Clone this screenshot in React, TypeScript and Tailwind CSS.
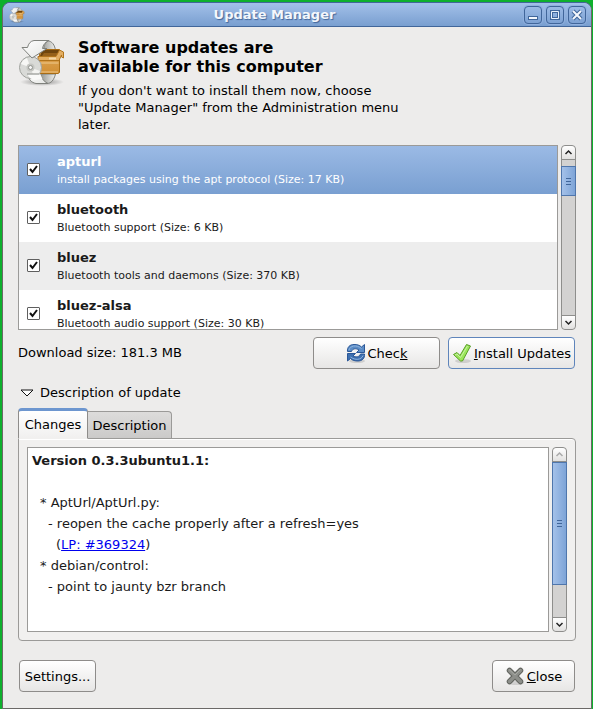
import { useState } from "react";
import type { ReactNode } from "react";

const updates = [
  { name: "apturl", summary: "install packages using the apt protocol (Size: 17 KB)" },
  { name: "bluetooth", summary: "Bluetooth support (Size: 6 KB)" },
  { name: "bluez", summary: "Bluetooth tools and daemons (Size: 370 KB)" },
  { name: "bluez-alsa", summary: "Bluetooth audio support (Size: 30 KB)" },
];

function UpdateIcon({ className, id }: { className: string; id: string }) {
  return (
    <svg viewBox="0 0 48 48" className={className} aria-hidden="true">
      <defs>
        <linearGradient id={id + "-paper"} x1="0" y1="0" x2="1" y2="1">
          <stop offset="0" stopColor="#ffffff" />
          <stop offset="1" stopColor="#e4e5e2" />
        </linearGradient>
        <linearGradient id={id + "-curl"} x1="0" y1="0" x2="1" y2="0">
          <stop offset="0" stopColor="#8b8d88" />
          <stop offset="1" stopColor="#f0f0ee" />
        </linearGradient>
        <linearGradient id={id + "-box"} x1="0" y1="0" x2="0" y2="1">
          <stop offset="0" stopColor="#e0a95a" />
          <stop offset="1" stopColor="#d18f35" />
        </linearGradient>
        <radialGradient id={id + "-shade"}>
          <stop offset="0" stopColor="#000000" stopOpacity="0.4" />
          <stop offset="1" stopColor="#000000" stopOpacity="0" />
        </radialGradient>
      </defs>
      <ellipse cx="24" cy="44" rx="22" ry="4" fill={`url(#${id}-shade)`} />
      <path d="M22 2.500 H29 C34 3 37 7 37.500 13 H26 C25.500 9 26 6 30 3Z" fill={`url(#${id}-curl)`} stroke="#7f817c" />
      <path d="M21 36 H37.500 C36 42 33 45.500 29 45.500 C25 44 23 41 21 36Z" fill={`url(#${id}-curl)`} stroke="#7f817c" />
      <path d="M9 35.500 H22 C23.500 40 26 44 30 45.500 H18 C13 44.500 10.500 41 9 35.500Z" fill={`url(#${id}-paper)`} stroke="#7f817c" />
      <path d="M22 11.500 H41.500 V34.500 L40 35.500 H20Z" fill={`url(#${id}-box)`} stroke="#a96c14" />
      <path d="M24 12 H41 V18 H22Z" fill="#6f450d" />
      <path d="M26 15 H41 V18 H24Z" fill="#95601a" />
      <path d="M20 18.500 H38 L41.500 12 L45.500 14 V20 L43.500 19 V17 L41 22.500 H20Z" fill="#e3ae62" stroke="#b1741c" />
      <path d="M21 25 H40.500 M21 34 H40" stroke="#efc98d" />
      <path d="M31 20.500 H38" stroke="#f5d8a7" strokeWidth="2" />
      <circle cx="12.500" cy="29.500" r="11" fill="#d9dad7" stroke="#a0a29d" />
      <path d="M12.500 29.500 L3 26 A10 10 0 0 1 9 20Z" fill="#f7f7f5" />
      <path d="M12.500 29.500 L22 33 A10 10 0 0 1 16 39Z" fill="#f4f4f2" />
      <circle cx="12.500" cy="29.500" r="4" fill="#c5c6c2" />
      <circle cx="12.500" cy="29.500" r="2" fill="#f6f6f6" stroke="#92948f" />
      <path d="M9 35.500 H22 L24.500 41 L16 42 C12.500 41 10.500 39 9 35.500Z" fill="#f9f9f8" />
      <path d="M9 36 H21.500" stroke="#7f817c" />
      <path d="M16 2.500 H31 C27 4 25 7 24.500 10.500 H29 L14 20 L4 9.500 H9.500 C10.500 5.500 12.500 3 16 2.500Z" fill={`url(#${id}-paper)`} stroke="#7f817c" strokeLinejoin="round" />
    </svg>
  );
}

function RefreshIcon() {
  return (
    <svg viewBox="0 0 20 20" className="size-5 shrink-0" aria-hidden="true">
      <ellipse cx="11" cy="18" rx="8" ry="2" fill="#000000" opacity="0.12" />
      <path d="M1.500 8.500 C1 4 4 1.500 8 1.500 C11 1.500 13.500 2 15.500 4 L18.500 1.500 V9.500 H10.500 L13 7 C10 5 6.500 5.500 5.500 8.500Z" fill="#5b8cc6" stroke="#2b5797" strokeLinejoin="round" />
      <path d="M18.500 11 C19 15.500 16 18 12 18 C9 18 6.500 17.500 4.500 15.500 L1.500 18 V10.500 H9.500 L7 13 C10 14.500 13.500 14 14.500 11Z" fill="#3f70b0" stroke="#2b5797" strokeLinejoin="round" />
      <path d="M3 7 C4 3 10 1 15.500 5.500 M17 12.500 C15.500 17 9 17.500 4.500 14" fill="none" stroke="#8fb5df" />
    </svg>
  );
}

function ApplyIcon() {
  return (
    <svg viewBox="0 0 20 20" className="size-5 shrink-0" aria-hidden="true">
      <ellipse cx="11" cy="18" rx="8" ry="2" fill="#000000" opacity="0.12" />
      <path d="M1.500 11.500 L5 9.500 L8 12.500 L14.500 1.500 L18.500 3 L10.500 18 H8.500Z" fill="#9be65a" stroke="#5a9e27" strokeLinejoin="round" />
      <path d="M3 12 L5 11 L8.500 14.500 L15.500 3" fill="none" stroke="#c9f3a6" />
    </svg>
  );
}

function CloseIcon() {
  return (
    <svg viewBox="0 0 20 20" className="size-5 shrink-0" aria-hidden="true">
      <ellipse cx="11" cy="17" rx="8" ry="2" fill="#000000" opacity="0.12" />
      <path d="M4.500 4.500 L15.500 15.500 M15.500 4.500 L4.500 15.500" stroke="#62645f" strokeWidth="5.500" strokeLinecap="round" />
      <path d="M4.500 4.500 L15.500 15.500 M15.500 4.500 L4.500 15.500" stroke="#8d8f8a" strokeWidth="3.500" strokeLinecap="round" />
      <path d="M4 3.500 L10 9 L15.500 3.500" fill="none" stroke="#a7a9a4" />
    </svg>
  );
}

function TitleButton({ label, children }: { label: string; children: ReactNode }) {
  return (
    <button aria-label={label} className="flex size-[18px] items-center justify-center rounded border border-[#41669a] bg-linear-to-b from-[#9bbae5] to-[#7da2d3] shadow-[0_0_0_1px_#91b1df]">
      <svg viewBox="0 0 16 16" className="size-4 shrink-0" aria-hidden="true">{children}</svg>
    </button>
  );
}

function Arrow({ up, muted }: { up?: boolean; muted?: boolean }) {
  return (
    <svg viewBox="0 0 13 13" className={`size-[13px] ${muted ? "text-[#aaa]" : "text-[#222]"}`} aria-hidden="true">
      <path d={up ? "M3.500 8 L6.500 5 L9.500 8" : "M3.500 5 L6.500 8 L9.500 5"} fill="none" stroke="currentColor" strokeWidth="1.500" />
    </svg>
  );
}

function ScrollBar({ label, thumb, gap, atTop }: { label: string; thumb: string; gap: string; atTop?: boolean }) {
  return (
    <div role="group" aria-label={label} className="flex w-[15px] shrink-0 flex-col rounded border border-[#8e8e8c] bg-[#d3d2d1]">
      <button aria-label="Scroll up" className="flex h-[13px] items-center justify-center rounded-t bg-linear-to-b from-white to-[#e2e1e0]">
        <Arrow up muted={atTop} />
      </button>
      <div className="flex grow flex-col border-y border-[#8e8e8c]">
        <div className={gap} />
        <div className={`-mx-px flex flex-col items-center justify-center gap-0.5 border border-[#4f76ac] bg-linear-to-r from-[#a4c1e9] to-[#7ea4d7] ${thumb}`}>
          <span className="h-px w-[5px] bg-[#41669a]" />
          <span className="h-px w-[5px] bg-[#41669a]" />
          <span className="h-px w-[5px] bg-[#41669a]" />
        </div>
      </div>
      <button aria-label="Scroll down" className="flex h-[13px] items-center justify-center rounded-b bg-linear-to-b from-white to-[#e2e1e0]">
        <Arrow />
      </button>
    </div>
  );
}

const buttonBase = "flex h-8 items-center justify-center rounded border bg-linear-to-b from-white to-[#e7e6e5]";

export default function App() {
  const [checked, setChecked] = useState([true, true, true, true]);
  const toggle = (index: number) => setChecked(checked.map((value, i) => (i === index ? !value : value)));

  return (
    <div className="flex min-h-screen flex-col bg-[#0eb02d] pt-0.5 pr-px pl-0.5 font-['DejaVu_Sans',sans-serif] text-[13px] leading-[17px] text-black">
      <main className="flex grow flex-col rounded-t-lg border border-[#6b6967] bg-[#edeceb]">
        <header className="flex h-6 items-center rounded-t-[7px] border-b border-[#41669a] bg-linear-to-b from-[#a3c0e9] to-[#799fd0] pr-[5px] pl-1.5 shadow-[0_-1px_0_#41669a]">
          <UpdateIcon id="title" className="size-4" />
          <h1 className="grow text-center font-bold text-[#f4f7fc] [text-shadow:1px_1px_1px_#41669a]">Update Manager</h1>
          <div className="flex gap-1">
            <TitleButton label="Minimize"><path d="M3 11 H13" stroke="#41669a" strokeWidth="4" /><path d="M4 11 H12" stroke="#f4f7fc" strokeWidth="2" /></TitleButton>
            <TitleButton label="Maximize"><path d="M4.500 4.500 H11.500 V11.500 H4.500Z" fill="none" stroke="#41669a" strokeWidth="3" /><path d="M4.500 4.500 H11.500 V11.500 H4.500Z" fill="none" stroke="#e9f0fa" /></TitleButton>
            <TitleButton label="Close window"><path d="M4 4 L12 12 M12 4 L4 12" stroke="#41669a" strokeWidth="4" /><path d="M4 4 L12 12 M12 4 L4 12" stroke="#f4f7fc" strokeWidth="2" /></TitleButton>
          </div>
        </header>

        <div className="flex grow flex-col px-[15px] pt-[11px] pb-4">
          <section className="flex gap-3">
            <UpdateIcon id="main" className="size-12 shrink-0" />
            <div>
              <h2 className="text-base leading-[19px] font-bold">Software updates are<br />available for this computer</h2>
              <p className="mt-1.5 max-w-[330px]">If you don't want to install them now, choose "Update Manager" from the Administration menu later.</p>
            </div>
          </section>

          <section className="mt-3 flex h-[185px] gap-[3px]">
            <div className="grow overflow-hidden border border-[#9b9a98] bg-white text-[#1a1a1a]">
              {updates.map((update, index) => (
                <label
                  key={update.name}
                  className={`flex h-12 items-center gap-[17px] pl-2 ${index === 0 ? "bg-linear-to-b from-[#9bbae5] to-[#799fd1] text-white" : index === 2 ? "bg-[#ededed]" : "bg-white"}`}
                >
                  <input type="checkbox" className="peer sr-only" checked={checked[index]} onChange={() => toggle(index)} />
                  <span className="mb-px flex size-[13px] shrink-0 items-center justify-center rounded-[1px] border border-[#5f5f5f] bg-white text-transparent peer-checked:text-[#111]">
                    <svg viewBox="0 0 11 11" className="size-[11px]" aria-hidden="true"><path d="M2 5 L4.500 8 L9 2" fill="none" stroke="currentColor" strokeWidth="2" /></svg>
                  </span>
                  <span className="flex flex-col gap-px">
                    <span className="font-bold">{update.name}</span>
                    <span className="text-[11px]">{update.summary}</span>
                  </span>
                </label>
              ))}
            </div>
            <ScrollBar label="Updates scroll bar" gap="h-1.5" thumb="h-[30px]" />
          </section>

          <section className="mt-[7px] flex gap-2 pr-px">
            <p className="grow pt-[7px]">Download size: 181.3 MB</p>
            <button className={`w-[127px] gap-0.5 border-[#8e8c8a] ${buttonBase}`}><RefreshIcon /><span>Chec<u>k</u></span></button>
            <button className={`w-[127px] gap-0.5 border-[#5f85bb] ${buttonBase}`}><ApplyIcon /><span className="whitespace-nowrap"><u>I</u>nstall Updates</span></button>
          </section>

          <section className="mt-[15px] flex grow flex-col">
            <button className="flex items-center gap-1.5 self-start pl-0.5">
              <svg viewBox="0 0 14 10" className="h-2.5 w-3.5" aria-hidden="true"><path d="M1 2 H13 L7 8Z" fill="white" stroke="#111" /></svg>
              Description of update
            </button>
            <div role="tablist" className="mt-[7px] flex items-end">
              <button role="tab" aria-selected="true" className="relative z-10 -mb-px h-[31px] w-[70px] rounded-t border border-t-[3px] border-x-[#8e8c8a] border-t-[#6d96cf] border-b-[#f1f0ef] bg-linear-to-b from-white to-[#f1f0ef]">Changes</button>
              <button role="tab" aria-selected="false" className="h-[27px] w-[84px] rounded-tr border border-b-0 border-l-0 border-[#9b9a98] bg-linear-to-b from-[#dddcdb] to-[#cbcac9]">Description</button>
            </div>
            <div role="tabpanel" className="flex grow gap-[3px] rounded-r rounded-b border border-[#9b9a98] bg-[#f1f0ef] p-2 shadow-[inset_0_1px_0_white]">
              <div className="min-h-[185px] grow border border-[#9b9a98] bg-white px-1 pt-0.5 leading-[21px] text-[#1a1a1a]">
                <h3 className="font-bold">Version 0.3.3ubuntu1.1:</h3>
                <ul className="pt-[21px] pl-2">
                  <li>* AptUrl/AptUrl.py:</li>
                  <li className="pl-2">- reopen the cache properly after a refresh=yes</li>
                  <li className="pl-4">(<a href="#369324" className="text-[#0000ee] underline">LP: #369324</a>)</li>
                  <li>* debian/control:</li>
                  <li className="pl-2">- point to jaunty bzr branch</li>
                </ul>
              </div>
              <ScrollBar label="Changes scroll bar" gap="h-0" thumb="h-[123px]" atTop />
            </div>
          </section>

          <footer className="mt-[19px] flex justify-between px-px">
            <button className={`w-[77px] border-[#8e8c8a] ${buttonBase}`}>Settings...</button>
            <button className={`w-[83px] gap-0.5 border-[#8e8c8a] ${buttonBase}`}><CloseIcon /><span><u>C</u>lose</span></button>
          </footer>
        </div>
      </main>
    </div>
  );
}
